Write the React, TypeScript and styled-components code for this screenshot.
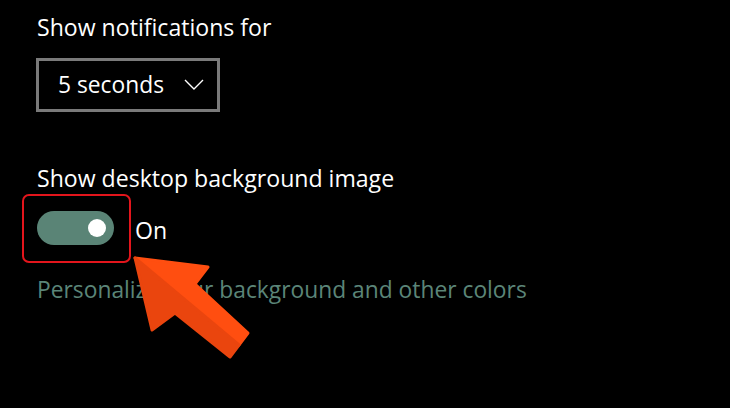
import React from 'react';
import styled, { createGlobalStyle } from 'styled-components';

const Global = createGlobalStyle`
  html, body { margin: 0; padding: 0; background: #000; }
  body { font-family: "Open Sans", "Noto Sans", sans-serif; }
`;

const Page = styled.div`
  position: relative;
  width: 730px;
  height: 408px;
  overflow: hidden;
  background: #000;
  color: #fff;
  box-sizing: border-box;
  padding: 11px 0 0 37px;
  display: flex;
  flex-direction: column;
  align-items: flex-start;
`;

const Label = styled.div<{ $top: number }>`
  font-size: 23.1px;
  line-height: 32px;
  color: #fff;
  margin-top: ${(p) => p.$top}px;
`;

const Dropdown = styled.div`
  margin-top: 15px;
  margin-left: -1px;
  box-sizing: border-box;
  width: 184px;
  height: 54px;
  border: 3px solid #7a7a7a;
  display: flex;
  align-items: center;
  padding: 0 13px 0 19px;
  font-size: 22.8px;
  line-height: 32px;
  color: #fff;
`;

const DropText = styled.span`
  flex: 1;
`;

const Chevron = styled.svg`
  width: 20px;
  height: 11px;
  flex: none;
  margin-top: -2px;
`;

const ToggleRow = styled.div`
  position: relative;
  margin-top: 17px;
  display: flex;
  align-items: flex-start;
  gap: 21px;
`;

const Highlight = styled.div`
  position: absolute;
  left: -15px;
  top: -17px;
  width: 109px;
  height: 69px;
  box-sizing: border-box;
  border: 2px solid #e3151c;
  border-radius: 7px;
  pointer-events: none;
`;

const Toggle = styled.div<{ $on: boolean }>`
  width: 77px;
  height: 34px;
  border-radius: 17px;
  background: ${(p) => (p.$on ? '#5a8476' : '#333')};
  display: flex;
  align-items: center;
  justify-content: ${(p) => (p.$on ? 'flex-end' : 'flex-start')};
  padding: 0 8px;
  box-sizing: border-box;
`;

const Knob = styled.div`
  width: 18px;
  height: 18px;
  border-radius: 50%;
  background: #fff;
`;

const State = styled.span`
  font-size: 23.1px;
  line-height: 32px;
  margin-top: 3px;
`;

const Link = styled.div`
  margin-top: 28px;
  font-size: 22.8px;
  line-height: 32px;
  color: #5b8578;
`;

const Arrow = styled.svg`
  position: absolute;
  left: 125px;
  top: 250px;
  width: 135px;
  height: 115px;
  pointer-events: none;
`;

const ox = 125;
const oy = 250;
const pt = (x: number, y: number) => `${x - ox},${y - oy}`;

export default function App() {
  const upper = [pt(135, 258), pt(208, 267), pt(195, 284), pt(248, 333), pt(239, 345)].join(' ');
  const lower = [pt(135, 258), pt(239, 345), pt(230, 357), pt(175, 313), pt(152, 330)].join(' ');
  return (
    <>
      <Global />
      <Page>
        <Label $top={0}>Show notifications for</Label>
        <Dropdown>
          <DropText>5 seconds</DropText>
          <Chevron viewBox="0 0 20 11">
            <polyline points="1,1 10,10 19,1" fill="none" stroke="#fff" strokeWidth="1.4" />
          </Chevron>
        </Dropdown>
        <Label $top={50}>Show desktop background image</Label>
        <ToggleRow>
          <Highlight />
          <Toggle $on>
            <Knob />
          </Toggle>
          <State>On</State>
        </ToggleRow>
        <Link>Personalize your background and other colors</Link>
        <Arrow viewBox="0 0 135 115">
          <polygon points={upper} fill="#ff4e10" stroke="#ff4e10" strokeWidth="3" strokeLinejoin="round" />
          <polygon points={lower} fill="#ea450e" stroke="#ea450e" strokeWidth="3" strokeLinejoin="round" />
        </Arrow>
      </Page>
    </>
  );
}
